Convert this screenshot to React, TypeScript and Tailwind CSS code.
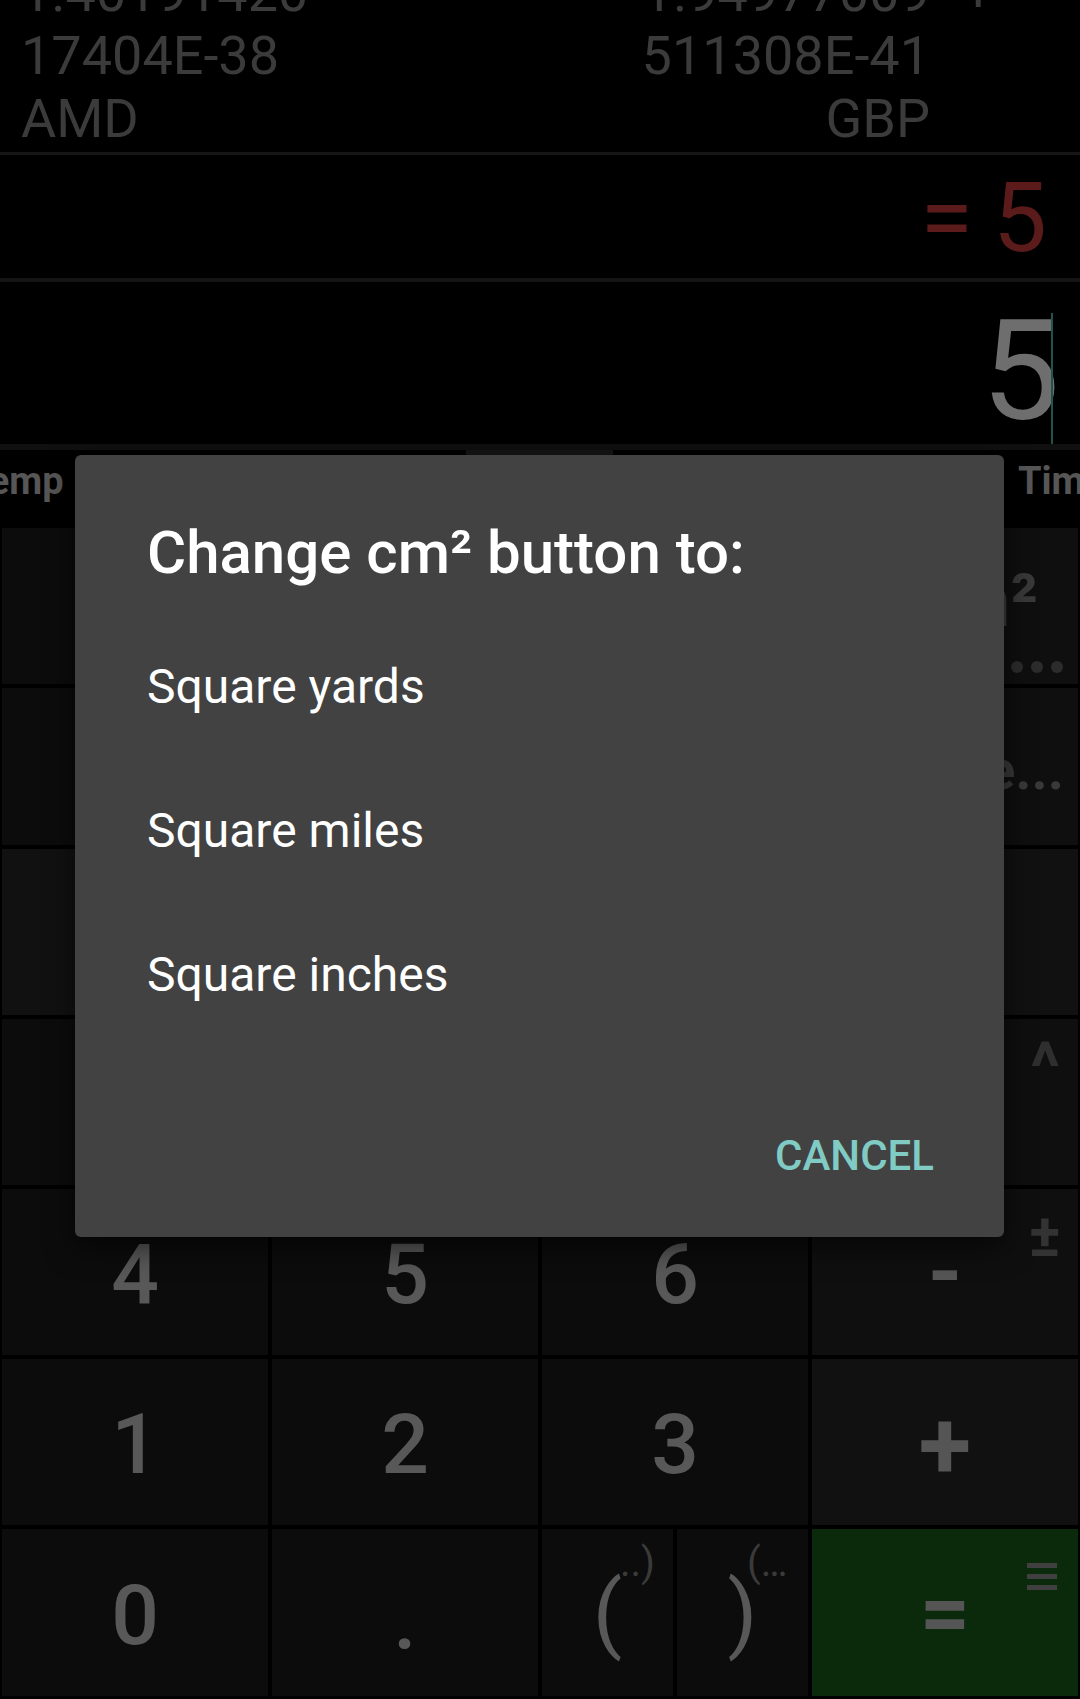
import React from "react";

type KeyProps = {
  label?: React.ReactNode;
  bg?: string;
  labelClass?: string;
  children?: React.ReactNode;
};

// one keypad cell, extra bits (superscripts) come in as children
function Key({ label, bg = "bg-[#0c0c0c]", labelClass = "", children }: KeyProps) {
  return (
    <div className={`relative flex items-center justify-center overflow-hidden ${bg}`}>
      {label !== undefined && (
        <span className={`leading-none ${labelClass}`}>{label}</span>
      )}
      {children}
    </div>
  );
}

const digit = "mt-[6px] text-[84px] font-medium text-[#585858]";
const oper = "text-[88px] font-bold text-[#555555]";

export default function App() {
  return (
    <div className="relative w-[1080px] h-[1699px] overflow-hidden bg-black font-[Roboto,sans-serif]">
      {/* Currency result lines */}
      <div className="h-[152px] overflow-hidden flex justify-between text-[54px] leading-[63px] text-[#3b3b3b] whitespace-nowrap">
        <div className="-mt-[39px] pl-[21px]">
          <div>1.40191420</div>
          <div>17404E-38</div>
          <div>AMD</div>
        </div>
        <div className="-mt-[39px] pr-[150px] text-right">
          <div>
            <span className="relative">
              1.94977009
              <span className="absolute left-full ml-[33px]">+</span>
            </span>
          </div>
          <div>511308E-41</div>
          <div>GBP</div>
        </div>
      </div>
      <div className="h-[3px] bg-[#161616]" />

      {/* Result */}
      <div className="h-[123px] flex justify-end items-start gap-[20px] pt-[15px] pr-[33px] text-[96px] leading-none text-[#5b1b1b]">
        <span>=</span>
        <span>5</span>
      </div>
      <div className="h-[4px] bg-[#141414]" />

      {/* Input */}
      <div className="h-[162px] flex justify-end pr-[27px]">
        <span className="mt-[19px] text-[140px] leading-none text-[#6e6e6e]">5</span>
        <div className="-ml-[9px] mt-[31px] w-[2px] h-[131px] bg-[#24524b]" />
      </div>
      <div className="h-[6px] bg-[#101010]" />

      {/* Tabs */}
      <div className="relative h-[78px] flex items-start overflow-hidden text-[38px] font-bold leading-none text-[#565656] whitespace-nowrap">
        <span className="-ml-[33px] mt-[12px]">Temp</span>
        <span className="ml-auto mt-[12px] w-[62px]">Time</span>
        <div className="absolute left-[466px] top-0 w-[147px] h-[8px] bg-[#151515]" />
      </div>

      {/* Keypad */}
      <div className="grid grid-cols-4 grid-rows-[156px_157px_166px_166px_166px_166px_167px] gap-[4px] px-[2px]">
        <Key />
        <Key />
        <Key />
        <Key bg="bg-[#0f0f0f]">
          <div className="absolute right-[40px] top-[36px] text-[74px] font-bold leading-none text-[#393939]">
            cm²
          </div>
          <div className="absolute right-[15px] top-[133px] flex gap-[8px]">
            <div className="w-[12px] h-[12px] rounded-full bg-[#2c2c2c]" />
            <div className="w-[12px] h-[12px] rounded-full bg-[#2c2c2c]" />
            <div className="w-[12px] h-[12px] rounded-full bg-[#2c2c2c]" />
          </div>
        </Key>

        <Key />
        <Key />
        <Key />
        <Key bg="bg-[#0f0f0f]">
          <div className="absolute right-[14px] top-[54px] text-[56px] font-bold leading-none text-[#393939]">
            More...
          </div>
        </Key>

        <Key bg="bg-[#111111]" label="C" labelClass={oper} />
        <Key bg="bg-[#111111]" label="%" labelClass={oper} />
        <Key bg="bg-[#111111]" label="⌫" labelClass={oper} />
        <Key bg="bg-[#111111]" label="÷" labelClass={oper} />

        <Key label="7" labelClass={digit} />
        <Key label="8" labelClass={digit} />
        <Key label="9" labelClass={digit} />
        <Key bg="bg-[#0f0f0f]" label="×" labelClass={oper}>
          <span className="absolute right-[18px] top-[14px] text-[68px] font-bold leading-none text-[#2f2f2f]">^</span>
        </Key>

        <Key label="4" labelClass={digit} />
        <Key label="5" labelClass={digit} />
        <Key label="6" labelClass={digit} />
        <Key bg="bg-[#0f0f0f]" label="-" labelClass={oper}>
          <span className="absolute right-[17px] top-[17px] text-[60px] font-bold leading-none text-[#333333]">±</span>
        </Key>

        <Key label="1" labelClass={digit} />
        <Key label="2" labelClass={digit} />
        <Key label="3" labelClass={digit} />
        <Key bg="bg-[#111111]" label="+" labelClass="mt-[6px] text-[96px] font-bold text-[#555555]" />

        <Key label="0" labelClass={digit} />
        <Key label="." labelClass="mt-[16px] text-[84px] font-medium text-[#585858]" />
        <div className="grid grid-cols-2 gap-[4px]">
          <Key label="(" labelClass="text-[86px] text-[#585858]">
            <span className="absolute right-[18px] top-[14px] text-[40px] leading-none text-[#3a3a3a]">..)</span>
          </Key>
          <Key label=")" labelClass="text-[86px] text-[#585858]">
            <span className="absolute left-[70px] top-[14px] text-[40px] leading-none text-[#3a3a3a]">(…</span>
          </Key>
        </div>
        <Key bg="bg-[#0b290b]" label="=" labelClass={oper}>
          <div className="absolute right-[21px] top-[34px] flex flex-col gap-[6px]">
            <div className="w-[30px] h-[5px] bg-[#404040]" />
            <div className="w-[30px] h-[5px] bg-[#404040]" />
            <div className="w-[30px] h-[5px] bg-[#404040]" />
          </div>
        </Key>
      </div>

      {/* Dialog */}
      <div className="absolute left-[75px] top-[455px] w-[929px] h-[782px] rounded-[6px] bg-[#424242] shadow-[0_10px_30px_rgba(0,0,0,0.6)] flex flex-col">
        <h2 className="pl-[72px] pt-[62px] text-[60px] font-medium leading-[72px] text-white">
          Change cm² button to:
        </h2>
        <div className="mt-[26px] flex flex-col text-[48px] leading-none text-white">
          <div className="h-[144px] flex items-center pl-[72px]">Square yards</div>
          <div className="h-[144px] flex items-center pl-[72px]">Square miles</div>
          <div className="h-[144px] flex items-center pl-[72px]">Square inches</div>
        </div>
        <div className="mt-[88px] flex justify-end pr-[70px]">
          <span className="text-[42px] font-medium leading-none text-[#80cbc4]">CANCEL</span>
        </div>
      </div>
    </div>
  );
}
